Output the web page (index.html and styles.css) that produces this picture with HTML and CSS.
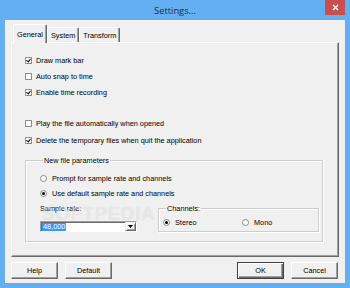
FILE: index.html
```html
<!DOCTYPE html>
<html lang="en">
<head>
  <meta charset="UTF-8" />
  <title>Settings...</title>
  <link rel="stylesheet" href="styles.css">
</head>
<body>
  <div class="window">
    <div class="titlebar">
      <span class="title">Settings...</span>
      <span class="close">
        <svg width="7" height="7" viewBox="0 0 7 7"><path d="M1 1L6 6M6 1L1 6" stroke="#fff" stroke-width="1.4" /></svg>
      </span>
    </div>
    <div class="client">
      <div class="tabs">
        <div class="tab active">General</div>
        <div class="tab">System</div>
        <div class="tab">Transform</div>
      </div>
      <div class="panel">
        <div class="check on"><span class="box"></span>Draw mark bar</div>
        <div class="check"><span class="box"></span>Auto snap to time</div>
        <div class="check on"><span class="box"></span>Enable time recording</div>
        <div class="check spaced"><span class="box"></span>Play the file automatically when opened</div>
        <div class="check on tight"><span class="box"></span>Delete the temporary files when quit the application</div>

        <fieldset class="group">
          <legend>New file parameters</legend>
          <div class="radio"><span class="dot"></span>Prompt for sample rate and channels</div>
          <div class="radio on"><span class="dot"></span>Use default sample rate and channels</div>
          <div class="sample-row">
            <div class="sample">
              <div class="label">Sample rate:</div>
              <div class="combo">
                <span class="value">48,000</span>
                <span class="drop">
                  <svg width="5" height="3" viewBox="0 0 5 3"><path d="M0 0H5L2.5 3Z" fill="#000" /></svg>
                </span>
              </div>
            </div>
            <fieldset class="channels">
              <legend>Channels:</legend>
              <div class="channel-list">
                <div class="radio on"><span class="dot"></span>Stereo</div>
                <div class="radio"><span class="dot"></span>Mono</div>
              </div>
            </fieldset>
          </div>
        </fieldset>
      </div>
      <div class="buttons">
        <div class="button-group">
          <button class="btn">Help</button>
          <button class="btn">Default</button>
        </div>
        <div class="button-group">
          <button class="btn default">OK</button>
          <button class="btn">Cancel</button>
        </div>
      </div>
    </div>
    <div class="watermark">SOFTPEDIA</div>
  </div>
</body>
</html>
```

FILE: styles.css
```css
* {
  box-sizing: border-box;
  margin: 0;
  padding: 0;
}
body {
  width: 350px;
  height: 288px;
  overflow: hidden;
  font-family: "Liberation Sans", Arial, sans-serif;
  font-size: 7.3px;
  color: #000;
}
.window {
  position: relative;
  width: 350px;
  height: 288px;
  background: #64aef2;
  padding: 0 5px 5px;
  display: flex;
  flex-direction: column;
}
.titlebar {
  height: 20px;
  display: grid;
  grid-template-columns: 1fr auto 1fr;
}
.title {
  grid-column: 2;
  font-family: "Open Sans", sans-serif;
  font-size: 9.3px;
  color: #2b2b2b;
  line-height: 21px;
}
.close {
  grid-column: 3;
  justify-self: end;
  width: 20px;
  height: 15px;
  background: #c7504f;
  display: flex;
  align-items: center;
  justify-content: center;
}
.client {
  flex: 1;
  background: #f0f0f0;
  padding: 4px 6px 4px;
  display: flex;
  flex-direction: column;
}

/* tabs */
.tabs {
  height: 18px;
  display: flex;
  align-items: flex-end;
  padding-left: 2px;
  position: relative;
  z-index: 1;
}
.tab {
  height: 15px;
  padding: 0 3px;
  line-height: 15px;
  border-left: 1px solid #fff;
  border-top: 1px solid #fff;
  border-right: 1px solid #696969;
  box-shadow: inset -1px 0 #a0a0a0;
  border-radius: 2px 2px 0 0;
}
.tab.active {
  height: 19px;
  margin-bottom: -1px;
  background: #f0f0f0;
  line-height: 20px;
}
.panel {
  flex: 1;
  border: 1px solid;
  border-color: #fff #696969 #696969 #fff;
  box-shadow: inset -1px -1px #a0a0a0;
  padding: 9px 15px 0 13px;
}

/* checkboxes and radios */
.check,
.radio {
  display: flex;
  align-items: center;
  height: 16px;
  gap: 4px;
  white-space: nowrap;
}
.check.spaced {
  margin-top: 15px;
}
.check.tight {
  margin-top: 1px;
}
.box {
  width: 7px;
  height: 7px;
  background: #fff;
  border: 1px solid #8e8f8f;
  position: relative;
}
.check.on .box::after {
  content: "";
  position: absolute;
  left: 1px;
  top: 0;
  width: 2px;
  height: 3px;
  border: solid #000;
  border-width: 0 1.3px 1.3px 0;
  transform: rotate(40deg);
}
.radio {
  height: 15px;
  gap: 5px;
}
.dot {
  width: 7px;
  height: 7px;
  border-radius: 50%;
  background: #fff;
  border: 1px solid #8a8a8a;
  display: flex;
  align-items: center;
  justify-content: center;
}
.radio.on .dot::after {
  content: "";
  width: 3px;
  height: 3px;
  border-radius: 50%;
  background: #000;
}

/* group boxes */
fieldset {
  border: 1px solid #cdcdcd;
  box-shadow: 1px 1px 0 #fff, inset 1px 1px 0 #fff;
}
legend {
  line-height: 9px;
  padding: 0 1px;
  margin-left: 3px;
}
.group {
  margin-top: 8px;
  padding: 6px 3px 9px 14px;
}
.sample-row {
  display: flex;
  align-items: flex-end;
  margin-top: 3px;
}
.sample {
  width: 97px;
}
.label {
  line-height: 10px;
}
.combo {
  margin-top: 7px;
  height: 11px;
  background: #fff;
  border: 1px solid;
  border-color: #a0a0a0 #fff #fff #a0a0a0;
  box-shadow: inset 1px 1px #696969;
  display: flex;
  align-items: flex-start;
  padding: 1px 0 0 1px;
}
.combo .value {
  background: #3399ff;
  color: #fff;
  line-height: 8px;
  padding: 0 1px;
}
.combo .drop {
  margin-left: auto;
  width: 11px;
  height: 9px;
  margin-top: -1px;
  background: #f0f0f0;
  border: 1px solid;
  border-color: #f0f0f0 #696969 #696969 #f0f0f0;
  box-shadow: inset 1px 1px #fff, inset -1px -1px #a0a0a0;
  display: flex;
  align-items: center;
  justify-content: center;
}
.channels {
  flex: 1;
  margin-left: 21px;
  padding: 2px 4px 2px;
}
.channel-list {
  display: grid;
  grid-template-columns: 79px auto;
}
.channel-list .radio {
  height: 14px;
}

/* bottom buttons */
.buttons {
  margin-top: 5px;
  display: flex;
  justify-content: space-between;
  padding-right: 1px;
}
.button-group {
  display: flex;
  gap: 7px;
}
.btn {
  width: 47px;
  height: 17px;
  font: inherit;
  color: #000;
  background: #f0f0f0;
  border: 1px solid;
  border-color: #fff #696969 #696969 #fff;
  box-shadow: inset -1px -1px #a0a0a0;
}
.btn.default {
  border-color: #404040;
  box-shadow: inset 1px 1px #fff, inset -1px -1px #696969, inset -2px -2px #a0a0a0;
}
.button-group .btn + .btn {
  margin-left: 0;
}
.watermark {
  position: absolute;
  left: 42px;
  top: 203px;
  font-family: "Liberation Sans", Arial, sans-serif;
  font-weight: bold;
  font-size: 19px;
  letter-spacing: 0.5px;
  color: rgba(255, 255, 255, 0.45);
  text-shadow: 0 0 1px rgba(0, 0, 0, 0.12);
  pointer-events: none;
}
```
